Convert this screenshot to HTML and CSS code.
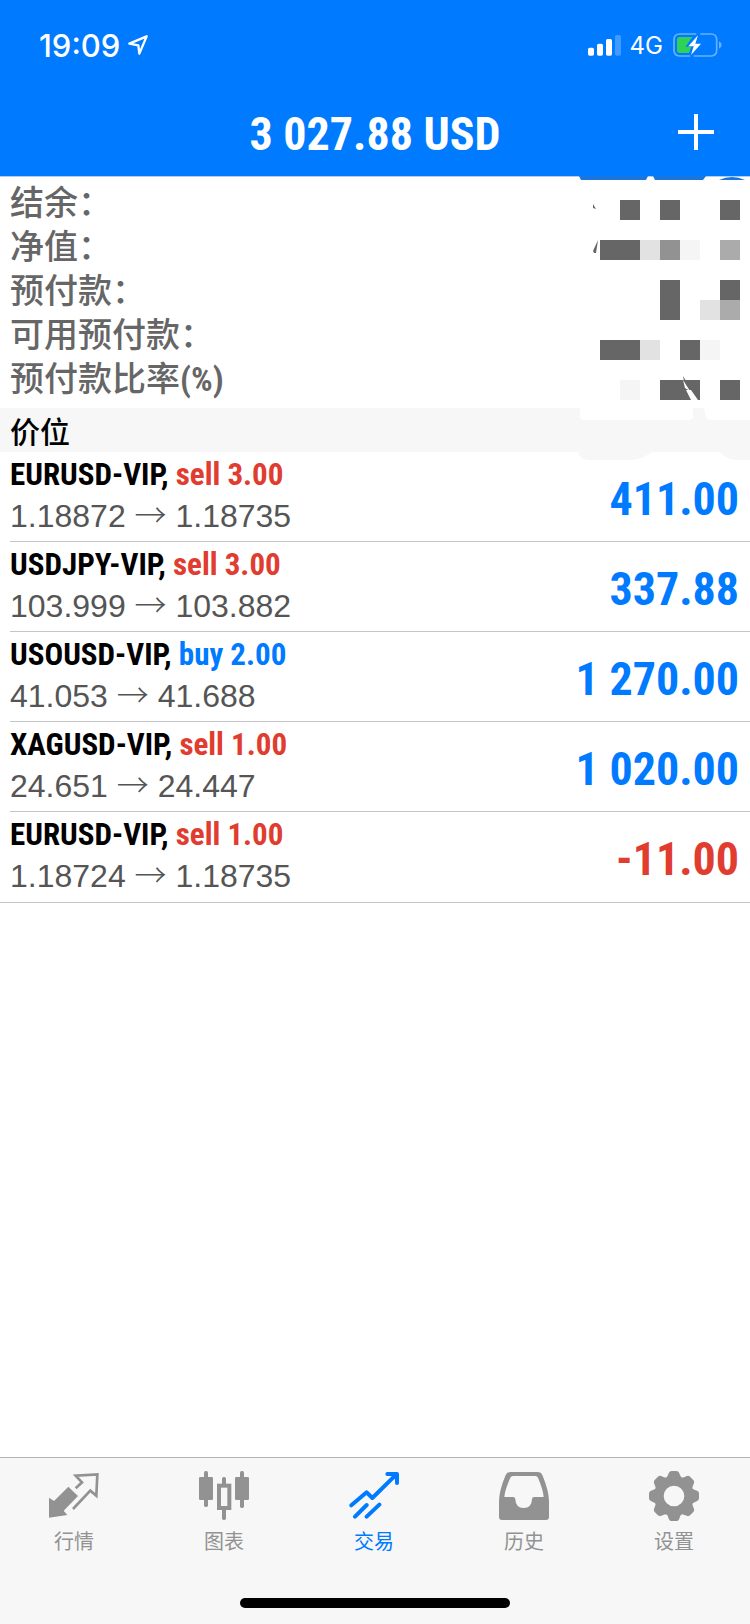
FILE: index.html
```html
<!DOCTYPE html>
<html lang="zh-CN">
<head>
<meta charset="utf-8">
<meta name="viewport" content="width=device-width, initial-scale=1">
<title>交易</title>
<link rel="stylesheet" href="styles.css">
</head>
<body>
<header class="top">
  <div class="status">
    <span class="time">19:09</span>
    <svg class="location" viewBox="0 0 60 60" aria-hidden="true"><path d="M4 26 L56 4 L34 56 L31 31 Z"/></svg>
    <span class="spacer"></span>
    <svg class="signal" viewBox="0 0 99 66" aria-hidden="true"><rect x="0" y="41" width="18" height="24" rx="5"/><rect x="27" y="29" width="18" height="36" rx="5"/><rect x="54" y="15" width="18" height="50" rx="5"/><rect class="weak" x="81" y="3" width="18" height="62" rx="5"/></svg>
    <span class="network">4G</span>
    <svg class="battery" viewBox="0 0 147 72" aria-hidden="true">
      <path class="shell" d="M70 3 H20 Q3 3 3 20 V52 Q3 69 20 69 H52 M82 3 H114 Q131 3 131 20 V52 Q131 69 114 69 H62"/>
      <path class="cap" d="M138 25 Q146 29 146 36 Q146 43 138 47 Z"/>
      <path class="charge" d="M20 12 H58 L38 41 H55 L48 60 H20 Q12 60 12 52 V20 Q12 12 20 12 Z"/>
      <path class="bolt" d="M75 7 L46 40 H62 L54 66 L84 32 H67 Z"/>
    </svg>
  </div>
  <div class="titlebar">
    <h1 class="balance">3 027.88 USD</h1>
    <button class="add" type="button" aria-label="新订单"><svg viewBox="0 0 36 36" aria-hidden="true"><path d="M18 0V36M0 18H36"/></svg></button>
  </div>
</header>
<main class="content">
  <section class="account">
    <dl class="summary">
      <dt>结余：</dt>
      <dt>净值：</dt>
      <dt>预付款：</dt>
      <dt>可用预付款：</dt>
      <dt>预付款比率<span class="latin">(%)</span></dt>
    </dl>
    <svg class="mosaic" viewBox="0 0 180 290" aria-hidden="true">
      <path fill="#fff" d="M9 2H180V210H9Z"/>
      <path fill="#1a75dc" d="M9 0H78L76 4H11ZM83 0H136L133 4H85ZM149 4Q162 -2 175 4Z"/>
      <path fill="#666" d="M50 24h20v20h-20zM90 24h20v20h-20zM150 24h20v20h-20zM30 64h40v20h-40zM90 104h20v40h-20zM150 104h20v20h-20zM30 164h40v20h-40zM110 164h20v20h-20zM90 204h40v20h-40zM150 204h20v20h-20zM23 28l3 5-3-1zM28 64l-5 11 1 2h2zM113 200l3 5h-2z"/>
      <path fill="#929292" d="M90 64h20v20h-20z"/>
      <path fill="#ababab" d="M150 64h20v20h-20zM150 124h20v20h-20z"/>
      <path fill="#e2e2e2" d="M70 64h20v20h-20zM130 124h20v20h-20zM70 164h20v20h-20z"/>
      <path fill="#f5f5f5" d="M110 64h20v20h-20zM130 164h20v20h-20zM50 204h20v20h-20z"/>
      <path fill="#fff" d="M113 204l7 11-5-3zM116 214h5l7 10h-7zM12 231H123V240Q123 244 119 244H14Q10 244 10 240V232ZM134 231H180V244H140Q136 244 135 238Z"/>
      <path fill="#f7f7f7" d="M8 275H83Q72 284 60 284H20Q9 284 8 275ZM149 275H180V284H168Q155 284 149 275Z"/>
    </svg>
  </section>
  <h2 class="section-title">价位</h2>
  <ul class="positions">
    <li class="position"><div class="detail"><p class="symbol">EURUSD-VIP, <span class="sell">sell 3.00</span></p><p class="prices">1.18872 <span class="arrow">→</span> 1.18735</p></div><strong class="profit">411.00</strong></li>
    <li class="position"><div class="detail"><p class="symbol">USDJPY-VIP, <span class="sell">sell 3.00</span></p><p class="prices">103.999 <span class="arrow">→</span> 103.882</p></div><strong class="profit">337.88</strong></li>
    <li class="position"><div class="detail"><p class="symbol">USOUSD-VIP, <span class="buy">buy 2.00</span></p><p class="prices">41.053 <span class="arrow">→</span> 41.688</p></div><strong class="profit">1 270.00</strong></li>
    <li class="position"><div class="detail"><p class="symbol">XAGUSD-VIP, <span class="sell">sell 1.00</span></p><p class="prices">24.651 <span class="arrow">→</span> 24.447</p></div><strong class="profit">1 020.00</strong></li>
    <li class="position"><div class="detail"><p class="symbol">EURUSD-VIP, <span class="sell">sell 1.00</span></p><p class="prices">1.18724 <span class="arrow">→</span> 1.18735</p></div><strong class="profit loss">-11.00</strong></li>
  </ul>
</main>
<footer class="bottom">
  <nav class="tabs">
    <a class="tab" href="#quotes"><svg viewBox="0 0 150 150" aria-hidden="true"><path class="fill" d="M0 80L15 90L58 47L87 75L44 119L55 132L0 140Z"/><path class="line" stroke-width="8" d="M80 52L99 34L80 14L145 10L142 74L124 59L72 114"/></svg>行情</a>
    <a class="tab" href="#charts"><svg viewBox="0 0 150 150" aria-hidden="true"><g class="fill"><rect y="18" width="42" height="69" rx="4"/><rect x="15" width="12" height="108" rx="5"/><rect x="108" y="18" width="42" height="69" rx="4"/><rect x="123" width="12" height="111" rx="5"/><rect x="69" y="18" width="12" height="26" rx="5"/><rect x="69" y="110" width="12" height="37" rx="5"/></g><rect class="line" x="60" y="44" width="31" height="67" stroke-width="12"/></svg>图表</a>
    <a class="tab active" href="#trade" aria-current="page"><svg viewBox="0 0 150 150" aria-hidden="true"><path class="line round" stroke-width="12" d="M7 103L53 64L70 81L142 10M115 9H144V36M18 137L53 102M53 137L91 101"/><path class="fill" d="M120 8H146V32Z"/></svg>交易</a>
    <a class="tab" href="#history"><svg viewBox="0 0 150 150" aria-hidden="true"><path class="fill" fill-rule="evenodd" d="M34 3H116Q126 3 130 12Q150 60 150 92V138Q150 147 141 147H9Q0 147 0 138V92Q0 60 20 12Q24 3 34 3ZM42 15Q36 15 34 20Q17 58 16 78H42Q49 78 49 85Q50 111 74 111Q98 111 99 85Q99 78 106 78H134Q133 58 117 20Q115 15 109 15Z"/></svg>历史</a>
    <a class="tab" href="#settings"><svg viewBox="0 0 150 150" aria-hidden="true"><defs><path id="tooth" d="M46 26Q55 20 58 10Q61 0 68 0H82Q89 0 92 10Q95 20 104 26Z"/></defs><g class="fill"><use href="#tooth"/><use href="#tooth" transform="rotate(45 75 75)"/><use href="#tooth" transform="rotate(90 75 75)"/><use href="#tooth" transform="rotate(135 75 75)"/><use href="#tooth" transform="rotate(180 75 75)"/><use href="#tooth" transform="rotate(225 75 75)"/><use href="#tooth" transform="rotate(270 75 75)"/><use href="#tooth" transform="rotate(315 75 75)"/></g><circle class="line" cx="75" cy="75" r="45" stroke-width="28"/></svg>设置</a>
  </nav>
  <div class="home-indicator"></div>
</footer>
</body>
</html>
```

FILE: styles.css
```css
* {
  box-sizing: border-box;
}

body {
  --blue: #007aff;
  --red: #e03c2f;
  --condensed: "Roboto Condensed", "Liberation Sans Narrow", "Liberation Sans", "Noto Sans CJK SC", sans-serif;
  display: flex;
  flex-direction: column;
  min-height: 100vh;
  margin: 0;
  background: #fff;
  color: #000;
  font-family: "Liberation Sans", "Noto Sans CJK SC", sans-serif;
}

h1, h2, p, dl, ul {
  margin: 0;
  padding: 0;
}

.top {
  background: var(--blue);
  border-bottom: 1px solid #b5cdea;
  color: #fff;
}

.status {
  display: flex;
  align-items: center;
  height: 88px;
  padding: 2px 28px 0 39px;
  font-family: Inter, "Liberation Sans", sans-serif;
}

.time {
  font-size: 31px;
  font-weight: 500;
}

.location {
  width: 20px;
  height: 20px;
  margin-left: 8px;
  fill: none;
  stroke: #fff;
  stroke-width: 7;
  stroke-linejoin: round;
}

.spacer {
  flex: 1;
}

.signal {
  width: 33px;
  height: 22px;
  margin-right: 9px;
  fill: #fff;
}

.weak {
  opacity: 0.25;
}

.network {
  margin-right: 10px;
  font-size: 24px;
  font-weight: 400;
}

.battery {
  width: 49px;
  height: 24px;
}

.shell {
  fill: none;
  stroke: #69b1ff;
  stroke-width: 5;
}

.cap {
  fill: #69b1ff;
}

.charge {
  fill: #30d158;
}

.bolt {
  fill: #fff;
}

.titlebar {
  display: grid;
  grid-template-columns: 1fr auto 1fr;
  align-items: center;
  height: 88px;
  padding: 0 36px;
}

.balance {
  grid-column: 2;
  padding-top: 4px;
  font-family: var(--condensed);
  font-size: 46px;
  font-weight: 700;
  line-height: 56px;
}

.add {
  justify-self: end;
  padding: 0;
  border: 0;
  background: none;
  line-height: 0;
}

.add svg {
  width: 36px;
  height: 36px;
  fill: none;
  stroke: #fff;
  stroke-width: 4;
}

.content {
  flex: 1;
}

.account {
  position: relative;
  padding: 2px 10px 9px;
}

.summary {
  color: #666;
  font-family: "Noto Sans CJK SC", sans-serif;
  font-size: 34px;
  font-weight: 500;
  line-height: 44px;
}

.latin {
  font-family: var(--condensed);
  font-weight: 700;
  line-height: 1;
}

.mosaic {
  position: absolute;
  top: -1px;
  right: 0;
  width: 180px;
  height: 290px;
}

.section-title {
  padding: 0 10px;
  background: #f7f7f7;
  font-family: "Noto Sans CJK SC", sans-serif;
  font-size: 30px;
  font-weight: 500;
  line-height: 44px;
}

.positions {
  border-bottom: 1px solid #c4c4c6;
  list-style: none;
}

.position {
  display: flex;
  align-items: center;
  justify-content: space-between;
  height: 90px;
  margin-left: 10px;
  padding-right: 11px;
  border-bottom: 1px solid #c4c4c6;
}

.position:last-child {
  border-bottom: 0;
}

.detail {
  padding-bottom: 4px;
}

.symbol {
  font-family: var(--condensed);
  font-size: 31px;
  font-weight: 700;
  line-height: 42px;
}

.prices {
  color: #555;
  font-size: 32px;
  line-height: 40px;
}

.arrow {
  font-family: "Noto Sans CJK SC", sans-serif;
  font-weight: 300;
  line-height: 1;
}

.buy {
  color: var(--blue);
}

.sell {
  color: var(--red);
}

.profit {
  padding-top: 4px;
  color: var(--blue);
  font-family: var(--condensed);
  font-size: 46px;
  font-weight: 700;
}

.profit.loss {
  color: var(--red);
}

.bottom {
  padding-bottom: 16px;
  border-top: 1px solid #b2b2b2;
  background: #f7f7f7;
}

.tabs {
  display: grid;
  grid-template-columns: repeat(5, 1fr);
}

.tab {
  display: flex;
  flex-direction: column;
  align-items: center;
  height: 140px;
  padding: 13px 2px 0 0;
  color: #929292;
  font-family: "Noto Sans CJK SC", sans-serif;
  font-size: 20px;
  line-height: 40px;
  text-decoration: none;
}

.tab svg {
  width: 50px;
  height: 50px;
}

.active {
  color: var(--blue);
}

.fill {
  fill: currentColor;
}

.line {
  fill: none;
  stroke: currentColor;
}

.round {
  stroke-linecap: round;
  stroke-linejoin: round;
}

.home-indicator {
  width: 36%;
  height: 10px;
  margin: 0 auto;
  border-radius: 5px;
  background: #000;
}
```
